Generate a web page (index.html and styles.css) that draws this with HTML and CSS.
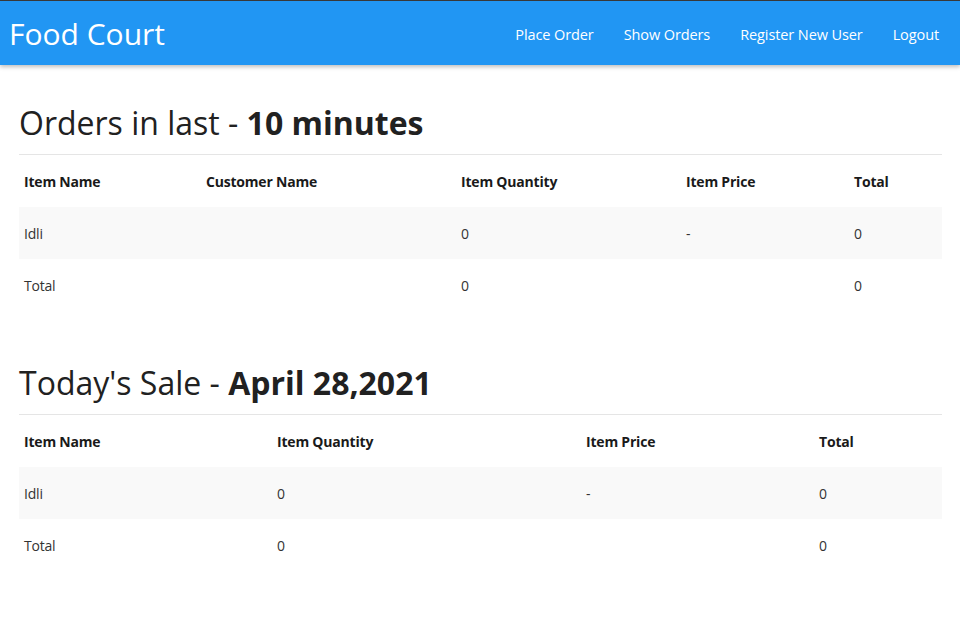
FILE: index.html
```html
<!DOCTYPE html>
<html>
<head>
<meta charset="utf-8">
<link rel="stylesheet" href="styles.css">
</head>
<body>
<div class="topline"></div>
<header class="navbar">
  <div class="brand">Food Court</div>
  <nav class="nav">
    <a href="#">Place Order</a>
    <a href="#">Show Orders</a>
    <a href="#">Register New User</a>
    <a href="#">Logout</a>
  </nav>
</header>
<main class="content">
  <section class="block">
    <h2 class="title">Orders in last - <b>10 minutes</b></h2>
    <table class="grid grid-orders">
      <thead>
        <tr><th>Item Name</th><th>Customer Name</th><th>Item Quantity</th><th>Item Price</th><th>Total</th></tr>
      </thead>
      <tbody>
        <tr class="stripe"><td>Idli</td><td></td><td>0</td><td>-</td><td>0</td></tr>
        <tr><td>Total</td><td></td><td>0</td><td></td><td>0</td></tr>
      </tbody>
    </table>
  </section>
  <section class="block block-second">
    <h2 class="title">Today's Sale - <b>April 28,2021</b></h2>
    <table class="grid grid-sale">
      <thead>
        <tr><th>Item Name</th><th>Item Quantity</th><th>Item Price</th><th>Total</th></tr>
      </thead>
      <tbody>
        <tr class="stripe"><td>Idli</td><td>0</td><td>-</td><td>0</td></tr>
        <tr><td>Total</td><td>0</td><td></td><td>0</td></tr>
      </tbody>
    </table>
  </section>
</main>
</body>
</html>
```
FILE: styles.css
```css
* { box-sizing: border-box; }
html, body { margin: 0; padding: 0; background: #fff; }
body {
  font-family: "Open Sans", "Noto Sans", sans-serif;
  color: #333;
  font-size: 14px;
}
.topline { height: 1px; background: #3a3a3a; }
.navbar {
  height: 64px;
  background: #2196f3;
  display: flex;
  align-items: center;
  justify-content: space-between;
  padding: 0 6px 0 9px;
  box-shadow: 0 2px 4px rgba(0,0,0,0.25);
  position: relative;
}
.brand {
  color: #fff;
  font-size: 30px;
  line-height: 1;
  margin-top: 1px;
}
.nav { display: flex; align-items: center; margin-top: 2px; }
.nav a {
  color: #fff;
  text-decoration: none;
  font-size: 14.5px;
  letter-spacing: -0.1px;
  padding: 0 15px;
}
.content { padding: 0 18px 0 19px; }
.block { padding-top: 38px; }
.block-second { padding-top: 52px; }
.title {
  margin: 0;
  font-weight: 400;
  font-size: 32px;
  line-height: 40px;
  color: #212121;
  padding-bottom: 11px;
  border-bottom: 1px solid #e5e5e5;
}
.title b { font-weight: 700; }
.grid {
  width: 100%;
  border-collapse: collapse;
}
.grid th, .grid td {
  text-align: left;
  padding: 0 5px;
  height: 52px;
  vertical-align: middle;
}
.grid th { font-weight: 700; color: #1a1a1a; font-size: 14px; letter-spacing: -0.2px; }
.grid td { font-size: 14px; letter-spacing: -0.2px; }
.stripe { background: #f9f9f9; }
.grid-orders th:nth-child(1) { width: 182px; }
.grid-orders th:nth-child(2) { width: 255px; }
.grid-orders th:nth-child(3) { width: 225px; }
.grid-orders th:nth-child(4) { width: 168px; }
.grid-sale th:nth-child(1) { width: 253px; }
.grid-sale th:nth-child(2) { width: 309px; }
.grid-sale th:nth-child(3) { width: 233px; }
```
